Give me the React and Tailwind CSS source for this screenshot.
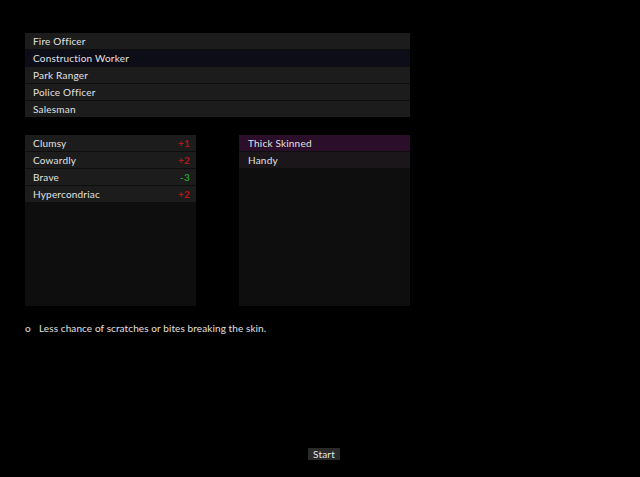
import React from "react";

const occupations = [
  { name: "Fire Officer" },
  { name: "Construction Worker", selected: true },
  { name: "Park Ranger" },
  { name: "Police Officer" },
  { name: "Salesman" },
];

const traits = [
  { name: "Clumsy", cost: "+1", bad: true },
  { name: "Cowardly", cost: "+2", bad: true },
  { name: "Brave", cost: "-3", bad: false },
  { name: "Hypercondriac", cost: "+2", bad: true },
];

export default function App() {
  return (
    <div className="w-[640px] h-[477px] bg-black flex flex-col pt-[33px] pl-[25px] font-['Lato','Noto_Sans',sans-serif] text-[10px] tracking-[0.2px] text-[#e2e2e2] overflow-hidden">
      {/* occupations */}
      <div className="w-[385px] flex flex-col gap-px bg-[#0e0e0e]">
        {occupations.map((o) => (
          <div
            key={o.name}
            className={`h-[16px] pl-[8px] flex items-center ${o.selected ? "bg-[#0d0d17]" : "bg-[#1c1c1c]"}`}
          >
            {o.name}
          </div>
        ))}
      </div>

      {/* trait panels */}
      <div className="mt-[18px] flex gap-[43px]">
        <div className="w-[171px] h-[171px] bg-[#0e0e0e] flex flex-col gap-px">
          {traits.map((t) => (
            <div key={t.name} className="h-[16px] pl-[8px] pr-[6px] flex items-center justify-between bg-[#1c1c1c]">
              <span>{t.name}</span>
              <span className={`font-bold ${t.bad ? "text-[#b81414]" : "text-[#2f9a2f]"}`}>{t.cost}</span>
            </div>
          ))}
        </div>
        <div className="w-[171px] h-[171px] bg-[#0e0e0e] flex flex-col gap-px">
          <div className="h-[16px] pl-[9px] flex items-center bg-[#2a0e2a]">Thick Skinned</div>
          <div className="h-[16px] pl-[9px] flex items-center bg-[#1a161a]">Handy</div>
        </div>
      </div>

      {/* description */}
      <div className="mt-[16px] flex items-center h-[12px] tracking-[0.1px]">
        <span className="w-[14px]">o</span>
        <span>Less chance of scratches or bites breaking the skin.</span>
      </div>

      {/* start */}
      <div className="mt-[113px] pl-[283px]">
        <button className="h-[12px] px-[5px] bg-[#2a2a2a] text-[#e6e6e6] text-[10px] leading-[12px] rounded-[1px]">
          Start
        </button>
      </div>
    </div>
  );
}
